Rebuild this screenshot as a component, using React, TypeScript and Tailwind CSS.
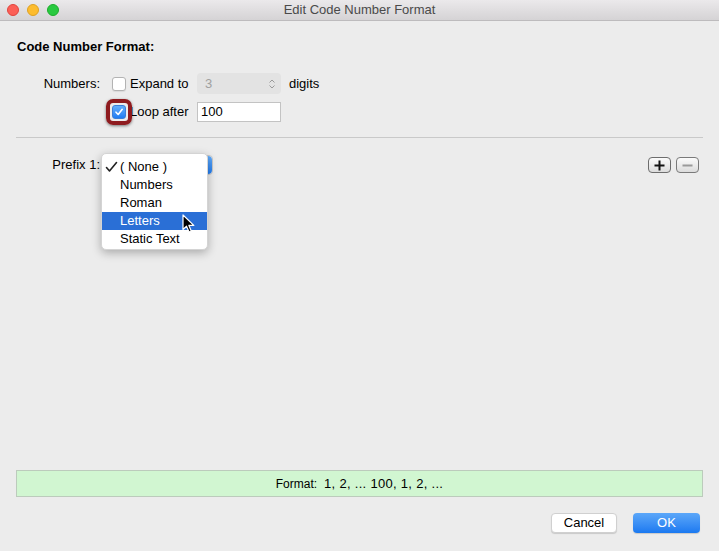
import React from "react";

const font = { fontFamily: '"Liberation Sans", Arial, sans-serif' };

function Checkbox({ checked }: { checked?: boolean }) {
  if (checked) {
    return (
      <span className="relative flex w-[14px] h-[14px] shrink-0">
        <span className="absolute -left-[6px] -top-[6px] w-[26px] h-[26px] rounded-[7px] border-[4px] border-[#8e1b1f] shadow-[0_1px_3px_rgba(0,0,0,0.5)]" />
        <span className="w-[14px] h-[14px] rounded-[3px] bg-gradient-to-b from-[#64aefb] to-[#1e7cf2] border border-[#3a7fd8] flex items-center justify-center">
          <svg width="10" height="10" viewBox="0 0 10 10">
            <path d="M2 5.2 L4.2 7.5 L8.2 2.3" stroke="white" strokeWidth="1.6" fill="none" strokeLinecap="round" strokeLinejoin="round" />
          </svg>
        </span>
      </span>
    );
  }
  return <span className="block w-[14px] h-[14px] shrink-0 rounded-[3px] bg-white border border-[#b3b3b3] shadow-[0_1px_1px_rgba(0,0,0,0.08)]" />;
}

export default function App() {
  return (
    <div className="w-[719px] h-[551px] bg-[#ececec] flex flex-col text-[13px] text-black overflow-hidden" style={font}>
      {/* Title bar */}
      <div className="relative h-[21px] shrink-0 bg-gradient-to-b from-[#ebe9eb] to-[#d5d3d5] border-b border-[#bdbbbd] flex items-center">
        <div className="flex items-center gap-[8px] pl-[7px]">
          <span className="w-[12px] h-[12px] rounded-full bg-[#fc5f57] border border-[#e0443e]" />
          <span className="w-[12px] h-[12px] rounded-full bg-[#fdbc2e] border border-[#dea123]" />
          <span className="w-[12px] h-[12px] rounded-full bg-[#29c940] border border-[#1dad2b]" />
        </div>
        <div className="absolute inset-0 flex items-center justify-center text-[13px] text-[#4a4a4a]">Edit Code Number Format</div>
      </div>

      {/* Content */}
      <div className="flex-1 flex flex-col pt-[18px]">
        <div className="ml-[17px] font-bold leading-[16px]">Code Number Format:</div>

        {/* Numbers row */}
        <div className="flex items-center mt-[18px] h-[21px]">
          <div className="w-[100px] text-right">Numbers:</div>
          <div className="ml-[12px]"><Checkbox /></div>
          <div className="ml-[4px] w-[67px]">Expand to</div>
          <div className="w-[84px] h-[21px] rounded-[4px] bg-[#e3e3e3] flex items-center justify-between pl-[8px] pr-[5px]">
            <span className="text-[#a0a0a0]">3</span>
            <svg width="8" height="12" viewBox="0 0 8 12">
              <path d="M1.5 4.5 L4 2 L6.5 4.5 M1.5 7.5 L4 10 L6.5 7.5" stroke="#9a9a9a" strokeWidth="1" fill="none" />
            </svg>
          </div>
          <div className="ml-[8px]">digits</div>
        </div>

        {/* Loop row */}
        <div className="flex items-center mt-[8px] h-[20px]">
          <div className="w-[100px]" />
          <div className="ml-[12px]"><Checkbox checked /></div>
          <div className="ml-[4px] w-[67px]">Loop after</div>
          <div className="w-[84px] h-[20px] bg-white border border-[#c3c3c3] flex items-center pl-[3px]">100</div>
        </div>

        <div className="mx-[16px] mt-[15px] h-px bg-[#c9c9c9]" />

        {/* Prefix row */}
        <div className="relative flex items-center mt-[17px] h-[20px]">
          <div className="w-[100px] text-right">Prefix 1:</div>
          <div className="ml-[4px] w-[109px] h-[20px] rounded-[4px] bg-white border border-[#c8c8c8] flex justify-end">
            <span className="w-[16px] h-full rounded-r-[4px] bg-gradient-to-b from-[#62acfa] to-[#1f7cf1]" />
          </div>
          <div className="ml-auto mr-[20px] flex gap-[5px]">
            <div className="w-[23px] h-[16px] rounded-[4px] border border-[#6d6d6d] bg-gradient-to-b from-[#fbfbfb] to-[#dcdcdc] flex items-center justify-center">
              <svg width="11" height="11" viewBox="0 0 11 11"><path d="M5.5 0.5 V10.5 M0.5 5.5 H10.5" stroke="#111" strokeWidth="2" /></svg>
            </div>
            <div className="w-[23px] h-[16px] rounded-[4px] border border-[#7a7a7a] bg-gradient-to-b from-[#fbfbfb] to-[#dcdcdc] flex items-center justify-center">
              <svg width="11" height="11" viewBox="0 0 11 11"><path d="M0.5 5.5 H10.5" stroke="#9a9a9a" strokeWidth="2" /></svg>
            </div>
          </div>

          {/* Dropdown menu */}
          <div className="absolute left-[101px] top-[-2px] w-[107px] h-[97px] bg-white rounded-[5px] border border-[#d4d4d4] shadow-[0_3px_10px_rgba(0,0,0,0.28)] pt-[4px] flex flex-col">
            <div className="h-[18px] flex items-center">
              <span className="w-[18px] pl-[3px] flex items-center">
                <svg width="13" height="12" viewBox="0 0 13 12"><path d="M1.5 6.5 L4.5 10 L11.5 1.5" stroke="#222" strokeWidth="1.6" fill="none" strokeLinecap="round" strokeLinejoin="round" /></svg>
              </span>
              <span>( None )</span>
            </div>
            <div className="h-[18px] flex items-center pl-[18px]">Numbers</div>
            <div className="h-[18px] flex items-center pl-[18px]">Roman</div>
            <div className="h-[18px] flex items-center pl-[18px] bg-[#2a6fd6] text-white">Letters</div>
            <div className="h-[18px] flex items-center pl-[18px]">Static Text</div>
          </div>

          {/* Cursor */}
          <svg className="absolute left-[182px] top-[59px]" width="14" height="20" viewBox="0 0 14 20">
            <path d="M1 1 L1 15.5 L4.5 12.2 L7 18 L9.3 17 L6.9 11.4 L11.8 11.4 Z" fill="#000" stroke="#fff" strokeWidth="1.2" strokeLinejoin="round" />
          </svg>
        </div>

        <div className="flex-1" />

        {/* Format box */}
        <div className="mx-[16px] h-[27px] bg-[#d1f6d1] border border-[#bccbbc] flex items-center justify-center whitespace-pre">
          <span className="text-[12px]">Format:</span>
          <span className="ml-[7px] text-[13px] tracking-[0.3px]">1, 2, ... 100, 1, 2, ...</span>
        </div>

        {/* Buttons */}
        <div className="flex justify-end gap-[16px] mt-[16px] mb-[18px] pr-[19px]">
          <div className="w-[66px] h-[20px] rounded-[4px] bg-white border border-[#d0d0d0] shadow-[0_1px_1px_rgba(0,0,0,0.15)] flex items-center justify-center">Cancel</div>
          <div className="w-[67px] h-[20px] rounded-[4px] bg-gradient-to-b from-[#5ba7f9] to-[#1a79f0] text-white shadow-[0_1px_1px_rgba(0,0,0,0.15)] flex items-center justify-center">OK</div>
        </div>
      </div>
    </div>
  );
}
